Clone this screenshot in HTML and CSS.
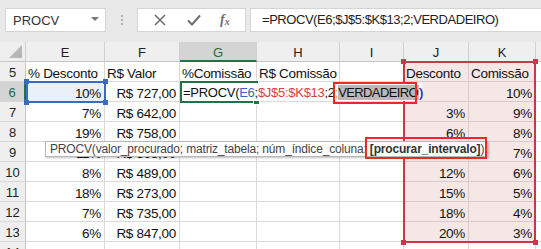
FILE: index.html
```html
<!DOCTYPE html>
<html lang="pt">
<head>
<meta charset="utf-8">
<link rel="stylesheet" href="styles.css">
</head>
<body>
<div class="app">
  <div class="fbar">
    <div class="namebox"><span>PROCV</span><span class="caret"></span></div>
    <div class="dots"><i></i><i></i><i></i></div>
    <div class="btns">
      <svg width="14" height="14" viewBox="0 0 14 14"><path d="M2 2L12 12M12 2L2 12" stroke="#6f6f6f" stroke-width="1.6" fill="none"/></svg>
      <svg width="16" height="14" viewBox="0 0 16 14"><path d="M2 7.5L6 11.5L14 2.5" stroke="#6f6f6f" stroke-width="2" fill="none"/></svg>
      <span class="fx">f<sub>x</sub></span>
    </div>
    <div class="formula">=PROCV(E6;$J$5:$K$13;2;VERDADEIRO)</div>
  </div>

  <div class="sheet">
    <div class="grid">
      <div class="ch corner"><span class="tri"></span></div>
      <div class="ch">E</div><div class="ch">F</div><div class="ch sel">G</div><div class="ch">H</div><div class="ch">I</div><div class="ch">J</div><div class="ch">K</div><div class="ch"></div>

      <div class="rh">5</div>
      <div class="c">% Desconto</div><div class="c">R$ Valor</div><div class="c">%Comissão</div><div class="c">R$ Comissão</div><div class="c"></div><div class="c p">Desconto</div><div class="c p">Comissão</div><div class="c"></div>

      <div class="rh sel">6</div>
      <div class="c r e6">10%</div><div class="c r">R$ 727,00</div><div class="c"></div><div class="c"></div><div class="c"></div><div class="c p"></div><div class="c p r">10%</div><div class="c"></div>

      <div class="rh">7</div>
      <div class="c r">7%</div><div class="c r">R$ 642,00</div><div class="c"></div><div class="c"></div><div class="c"></div><div class="c p r">3%</div><div class="c p r">9%</div><div class="c"></div>

      <div class="rh">8</div>
      <div class="c r">19%</div><div class="c r">R$ 758,00</div><div class="c"></div><div class="c"></div><div class="c"></div><div class="c p r">6%</div><div class="c p r">8%</div><div class="c"></div>

      <div class="rh">9</div>
      <div class="c r">11%</div><div class="c r">R$ 598,00</div><div class="c"></div><div class="c"></div><div class="c"></div><div class="c p r">9%</div><div class="c p r">7%</div><div class="c"></div>

      <div class="rh">10</div>
      <div class="c r">8%</div><div class="c r">R$ 489,00</div><div class="c"></div><div class="c"></div><div class="c"></div><div class="c p r">12%</div><div class="c p r">6%</div><div class="c"></div>

      <div class="rh">11</div>
      <div class="c r">18%</div><div class="c r">R$ 273,00</div><div class="c"></div><div class="c"></div><div class="c"></div><div class="c p r">15%</div><div class="c p r">5%</div><div class="c"></div>

      <div class="rh">12</div>
      <div class="c r">7%</div><div class="c r">R$ 735,00</div><div class="c"></div><div class="c"></div><div class="c"></div><div class="c p r">18%</div><div class="c p r">4%</div><div class="c"></div>

      <div class="rh">13</div>
      <div class="c r">6%</div><div class="c r">R$ 847,00</div><div class="c"></div><div class="c"></div><div class="c"></div><div class="c p r">20%</div><div class="c p r">3%</div><div class="c"></div>

      <div class="rh">14</div>
      <div class="c r">4%</div><div class="c r">R$ 512,00</div><div class="c"></div><div class="c"></div><div class="c"></div><div class="c"></div><div class="c"></div><div class="c"></div>
    </div>

    <div class="ref-blue"><b class="h tl"></b><b class="h tr"></b><b class="h bl"></b><b class="h br"></b></div>
    <div class="ref-red"><b class="h tl"></b><b class="h tr"></b><b class="h bl"></b><b class="h br"></b></div>
    <div class="active"><b class="fill"></b></div>
    <div class="edit"><span class="pre">=PROCV(<span class="cb">E6</span>;<span class="cr">$J$5:$K$13</span>;2<span class="co">;</span></span><span class="hl">VERDADEIRO</span><span class="cp">)</span></div>
    <div class="tip">PROCV(valor_procurado; matriz_tabela; núm_índice_coluna; <b>[procurar_intervalo]</b>)</div>
    <div class="mark mark1"></div>
    <div class="mark mark2"></div>
  </div>
</div>
</body>
</html>
```

FILE: styles.css
```css
* { box-sizing: border-box; }
html, body { margin: 0; padding: 0; }
body { width: 541px; height: 249px; overflow: hidden; background: #fff; font-family: "Liberation Sans", Arial, sans-serif; }
.app { width: 541px; height: 249px; overflow: hidden; }

.fbar { height: 42px; background: #e9e9e9; display: flex; align-items: flex-start; padding: 8px 0 0 5px; }
.namebox { width: 101px; height: 24px; background: #fff; border: 1px solid #d4d4d4; display: flex; align-items: center; justify-content: space-between; padding: 0 6px 0 7px; font-size: 13px; color: #333; }
.caret { width: 0; height: 0; border-left: 4px solid transparent; border-right: 4px solid transparent; border-top: 4px solid #777; margin-top: -3px; }
.dots { width: 31px; height: 24px; display: flex; flex-direction: column; align-items: center; justify-content: center; gap: 2px; }
.dots i { width: 2px; height: 2px; background: #b0b0b0; display: block; }
.btns { width: 109px; height: 24px; background: #fff; border: 1px solid #d4d4d4; display: flex; align-items: center; justify-content: space-around; padding: 0 6px; }
.fx { font-family: "Liberation Serif", serif; font-style: italic; font-size: 14px; color: #6f6f6f; font-weight: bold; }
.fx sub { font-size: 10px; vertical-align: -1px; }
.formula { flex: 1; margin-left: 4px; margin-right: -6px; height: 24px; background: #fff; border: 1px solid #d4d4d4; font-size: 13px; line-height: 22px; padding-left: 11px; color: #222; letter-spacing: -0.45px; white-space: nowrap; overflow: hidden; }

.sheet { position: relative; }
.grid { display: grid; grid-template-columns: 26px 79px 75px 77px 83px 64px 65px 67px 40px; grid-template-rows: repeat(11, 20px); }
.ch { background: #efefef; border-right: 1px solid #cfcfcf; border-bottom: 1px solid #c6c6c6; text-align: center; font-size: 13px; line-height: 22px; color: #222; }
.ch.sel { background: #d4d4d4; color: #1e6b40; border-bottom: 2px solid #217346; }
.corner { position: relative; }
.tri { position: absolute; right: 3px; bottom: 3px; width: 0; height: 0; border-left: 13px solid transparent; border-bottom: 13px solid #b7b7b7; }
.rh { background: #efefef; border-right: 1px solid #c6c6c6; border-bottom: 1px solid #d7d7d7; text-align: center; font-size: 13px; line-height: 22px; color: #222; }
.rh.sel { background: #d4d4d4; color: #1e6b40; border-right: 2px solid #217346; }
.c { border-right: 1px solid #dadada; border-bottom: 1px solid #dadada; font-size: 13.5px; line-height: 23px; padding: 0 3px 0 2px; white-space: nowrap; color: #111; overflow: visible; letter-spacing: -0.3px; }
.c.r { text-align: right; }
.c.p { background: #f6e7e7; border-color: #dccaca; }
.c.e6 { background: #e9f0f9; }

.ref-blue { position: absolute; left: 26px; top: 39px; width: 80px; height: 22px; border: 2px solid #3a6dc2; }
.ref-red { position: absolute; left: 403px; top: 19px; width: 133px; height: 182px; border: 2px solid #c53a48; }
.h { position: absolute; width: 5px; height: 5px; }
.ref-blue .h { background: #3a6dc2; }
.ref-red .h { background: #c53a48; }
.tl { left: -4px; top: -4px; } .tr { right: -4px; top: -4px; } .bl { left: -4px; bottom: -4px; } .br { right: -4px; bottom: -4px; }

.active { position: absolute; left: 180px; top: 39px; width: 78px; height: 22px; border: 2px solid #217346; }
.fill { position: absolute; right: -4px; bottom: -4px; width: 5px; height: 5px; background: #217346; border: 1px solid #fff; box-sizing: content-box; }

.edit { position: absolute; left: 182px; top: 41px; width: 240px; height: 18px; background: #fff; font-size: 13px; line-height: 19px; white-space: nowrap; color: #111; padding-left: 1px; }
.pre { letter-spacing: -0.28px; }
.cb { color: #3366cc; }
.cr { color: #e0403c; }
.co { color: #d89a10; }
.hl { background: #b9b9b9; letter-spacing: -0.6px; padding-right: 1px; }
.cp { color: #3a3aa8; font-weight: bold; }

.tip { position: absolute; left: 45px; top: 99px; width: 443px; height: 16px; background: #fff; border: 1px solid #b8b8b8; box-shadow: 1px 1px 2px rgba(0,0,0,0.25); font-size: 12px; line-height: 14px; padding-left: 4px; color: #444; white-space: nowrap; letter-spacing: -0.17px; }
.tip b { color: #333; }

.mark { position: absolute; border: 2px solid #e82a2a; }
.mark1 { left: 333px; top: 40px; width: 84px; height: 22px; }
.mark2 { left: 365px; top: 95px; width: 122px; height: 22px; }
```
